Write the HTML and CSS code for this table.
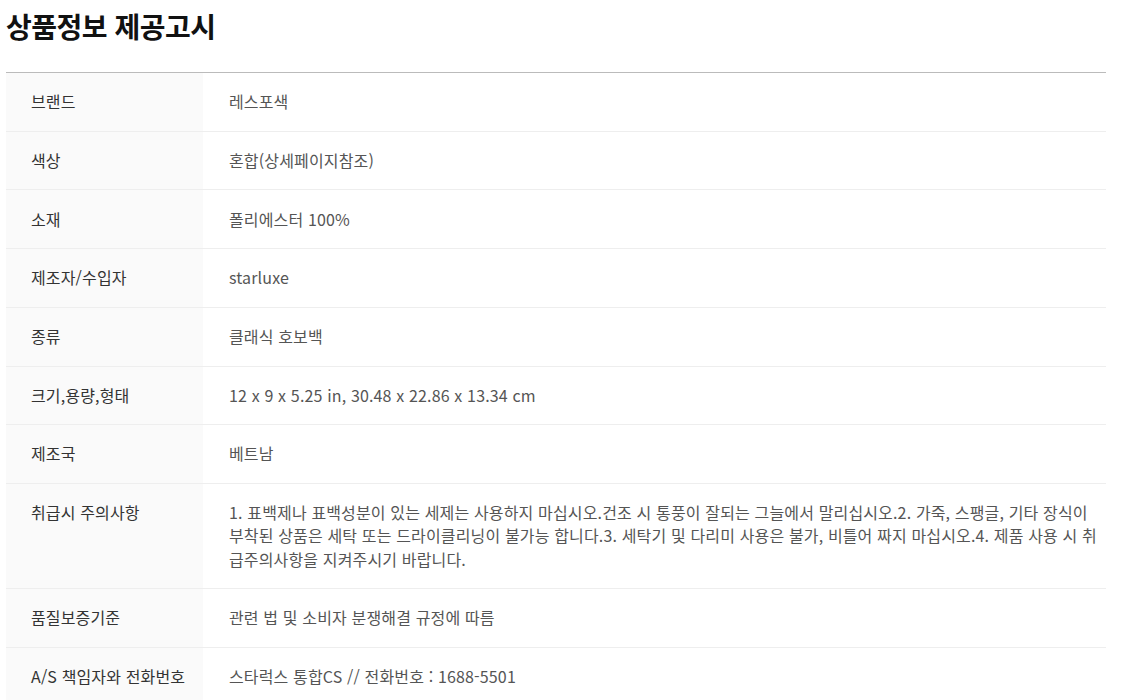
FILE: index.html
```html
<!DOCTYPE html>
<html lang="ko">
<head>
  <meta charset="UTF-8">
  <meta name="viewport" content="width=device-width, initial-scale=1.0">
  <title>상품정보 제공고시</title>
  <link rel="stylesheet" href="styles.css">
</head>
<body>
  <div class="notice">
    <h2>상품정보 제공고시</h2>
    <table class="info-table">
      <tr>
        <th>브랜드</th>
        <td>레스포색</td>
      </tr>
      <tr>
        <th>색상</th>
        <td>혼합(상세페이지참조)</td>
      </tr>
      <tr>
        <th>소재</th>
        <td>폴리에스터 100%</td>
      </tr>
      <tr>
        <th>제조자/수입자</th>
        <td>starluxe</td>
      </tr>
      <tr>
        <th>종류</th>
        <td>클래식 호보백</td>
      </tr>
      <tr>
        <th>크기,용량,형태</th>
        <td>12 x 9 x 5.25 in, 30.48 x 22.86 x 13.34 cm</td>
      </tr>
      <tr>
        <th>제조국</th>
        <td>베트남</td>
      </tr>
      <tr>
        <th>취급시 주의사항</th>
        <td>1. 표백제나 표백성분이 있는 세제는 사용하지 마십시오.건조 시 통풍이 잘되는 그늘에서 말리십시오.2. 가죽, 스팽글, 기타 장식이 부착된 상품은 세탁 또는 드라이클리닝이 불가능 합니다.3. 세탁기 및 다리미 사용은 불가, 비틀어 짜지 마십시오.4. 제품 사용 시 취급주의사항을 지켜주시기 바랍니다.</td>
      </tr>
      <tr>
        <th>품질보증기준</th>
        <td>관련 법 및 소비자 분쟁해결 규정에 따름</td>
      </tr>
      <tr>
        <th>A/S 책임자와 전화번호</th>
        <td>스타럭스 통합CS // 전화번호 : 1688-5501</td>
      </tr>
    </table>
  </div>
</body>
</html>
```

FILE: styles.css
```css
body {
  font-family: "Noto Sans CJK KR", "Noto Sans", sans-serif;
  background-color: #fff;
  margin: 0;
  padding: 0 29px 0 6px;
}
.notice h2 {
  margin: 0;
  padding-top: 6px;
  height: 66px;
  font-size: 28px;
  line-height: 40px;
  font-weight: 700;
  letter-spacing: -0.5px;
  color: #111;
}
.info-table {
  width: 100%;
  table-layout: fixed;
  border-collapse: collapse;
  border-top: 1px solid #bbb;
  font-size: 16px;
  line-height: 23.2px;
  letter-spacing: 0.15px;
}
.info-table th,
.info-table td {
  vertical-align: top;
  text-align: left;
  padding: 17.25px 5px 17.25px 26px;
  border-bottom: 1px solid #eee;
}
.info-table th {
  width: 172px;
  padding-left: 25px;
  padding-right: 0;
  white-space: nowrap;
  background: #fafafa;
  font-weight: 400;
  color: #333;
}
.info-table td {
  color: #555;
  word-break: break-all;
}
```
